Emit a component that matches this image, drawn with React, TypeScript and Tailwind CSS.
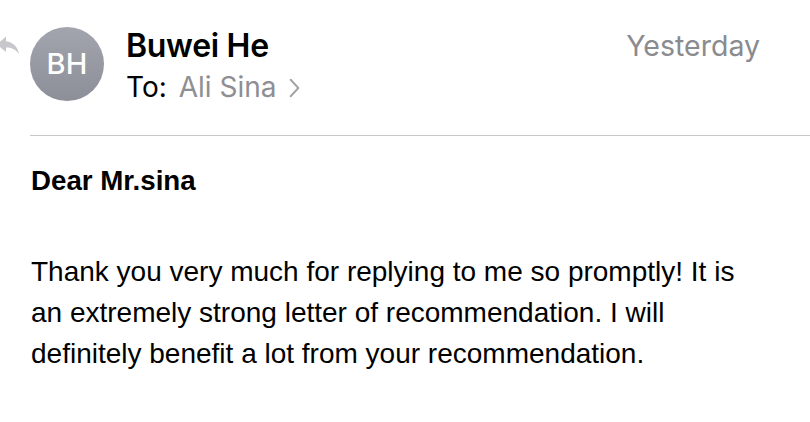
import React from 'react';

function ReplyArrow() {
  return (
    <svg viewBox="0 0 24 20" className="w-[24px] h-[20px]" fill="#c7c7cc">
      <path d="M10 1.5 L1 9.5 L10 17 V12.5 C15.5 12.5 19.5 14 23 19 C22 12.5 17.5 7 10 6.2 Z" />
    </svg>
  );
}

function Chevron() {
  return (
    <svg viewBox="0 0 10 18" className="w-[11px] h-[20px]" fill="none" stroke="#a3a3a8" strokeWidth="1.8" strokeLinecap="round" strokeLinejoin="round">
      <polyline points="1.5,1.5 8.5,9 1.5,16.5" />
    </svg>
  );
}

export default function App() {
  return (
    <div className="w-[810px] h-[422px] bg-white overflow-hidden">
      {/* Header */}
      <div className="flex items-start pt-[27px]">
        <div className="-ml-[4px] mt-[8px] w-[34px] shrink-0">
          <ReplyArrow />
        </div>
        <div className="w-[74px] h-[74px] rounded-full bg-gradient-to-b from-[#a2a5ae] to-[#8c8f98] flex items-center justify-center shrink-0">
          <span className="text-white text-[29px] font-medium tracking-[0.3px]" style={{ fontFamily: 'Inter, "Noto Sans", sans-serif' }}>BH</span>
        </div>
        <div className="flex-1 flex ml-[22px] pr-[50px]" style={{ fontFamily: 'Inter, "Noto Sans", sans-serif' }}>
          <div className="flex-1 flex flex-col">
            <div className="text-[32px] leading-[38px] font-semibold text-black tracking-[-0.3px]">Buwei He</div>
            <div className="flex items-center text-[28px] leading-[36px] mt-[4px]">
              <span className="text-black">To:</span>
              <span className="text-[#8e8e93] ml-[12px]">Ali Sina</span>
              <span className="ml-[12px] mt-[2px]"><Chevron /></span>
            </div>
          </div>
          <div className="text-[28.5px] leading-[38px] text-[#8a8a8f]">Yesterday</div>
        </div>
      </div>

      {/* Divider */}
      <div className="ml-[30px] mt-[30px] h-px bg-[#c8c7cc]" />

      {/* Body */}
      <div className="pl-[31px] pr-[40px] text-black" style={{ fontFamily: '"Liberation Sans", Arial, sans-serif' }}>
        <p className="text-[27.7px] leading-[41px] font-bold mt-[24px]">Dear Mr.sina</p>
        <p className="text-[28px] leading-[41px] mt-[50px]">
          Thank you very much for replying to me so promptly! It is
          <br />
          an extremely strong letter of recommendation. I will
          <br />
          definitely benefit a lot from your recommendation.
        </p>
      </div>
    </div>
  );
}
